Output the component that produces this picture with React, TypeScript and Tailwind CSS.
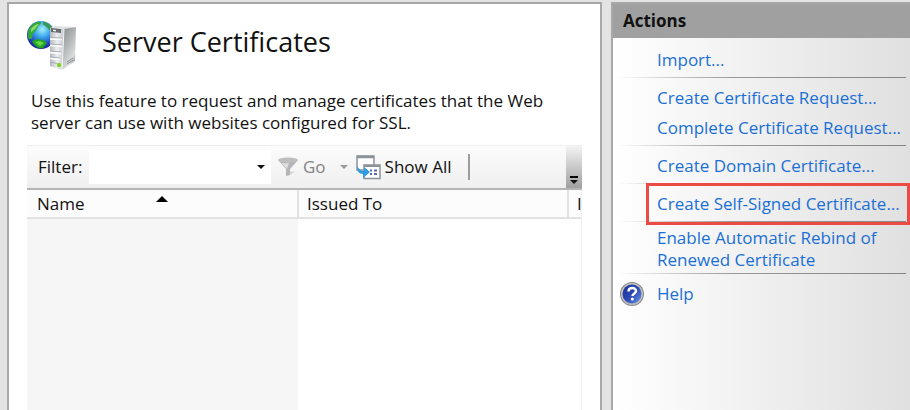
import { useState } from 'react';
import clsx from 'clsx';

interface Action {
  label: string;
  icon?: boolean;
  highlighted?: boolean;
  multiline?: boolean;
}

const ACTION_GROUPS: Action[][] = [
  [{ label: 'Import...' }],
  [{ label: 'Create Certificate Request...' }, { label: 'Complete Certificate Request...' }],
  [{ label: 'Create Domain Certificate...' }],
  [{ label: 'Create Self-Signed Certificate...', highlighted: true }],
  [{ label: 'Enable Automatic Rebind of Renewed Certificate', multiline: true }],
  [{ label: 'Help', icon: true }],
];

function ServerIcon() {
  return (
    <svg width="50" height="52" viewBox="0 0 50 52" aria-hidden="true" className="shrink-0">
      <defs>
        <radialGradient id="ocean" cx="0.55" cy="0.3" r="0.7">
          <stop offset="0" stopColor="#a5f0ff" />
          <stop offset="0.4" stopColor="#3aa5ea" />
          <stop offset="0.75" stopColor="#2448c4" />
          <stop offset="1" stopColor="#1a2590" />
        </radialGradient>
        <linearGradient id="side" x1="0" y1="0" x2="0.6" y2="1">
          <stop offset="0" stopColor="#858a8a" />
          <stop offset="0.55" stopColor="#b9bdbd" />
          <stop offset="0.85" stopColor="#dcdede" />
          <stop offset="1" stopColor="#9a9e9e" />
        </linearGradient>
        <linearGradient id="front" x1="0" y1="0" x2="1" y2="0">
          <stop offset="0" stopColor="#b4b8bd" />
          <stop offset="0.5" stopColor="#eceef0" />
          <stop offset="1" stopColor="#c4c7ca" />
        </linearGradient>
      </defs>
      <circle cx="14" cy="15" r="14" fill="url(#ocean)" />
      <path d="M1.500 10C3.500 5 8 1.500 13 1.500l1 2-3 3-2 4-3 3-1 5-3 1C.5 16 .5 13 1.500 10Z" fill="#35a83c" />
      <path d="M4 9c2-3 5-5 8-5l-4 5-4 3Z" fill="#8fdc6a" />
      <path d="M16 1.500c5 1 9 4 11 8l-4 1-4-4-3-2Z" fill="#3a9a55" />
      <path d="M5 21l5-2 6 1 4 3-4 5c-4 1-8-1-11-7Z" fill="#22a524" />
      <path d="M8 22l5-1 4 2-4 3Z" fill="#67d545" />
      <path d="M23 8l5-2 21 1-12 2Z" fill="#dfe1e2" />
      <path d="M23 8l14 1-2 41-12-4Z" fill="url(#front)" />
      <path d="M37 9l12-2-1 34-13 9Z" fill="url(#side)" />
      <path d="M37 9l-2 41" stroke="#f4f5f5" strokeWidth="1" />
      <path d="M24 8l10 1v4l-10-1Z" fill="#666b70" />
      <path d="M26 9.500l3 .4v1.500l-3-.3Z" fill="#f4f4f4" />
      <path d="M23 17.500l12 .5M23 24l12 1M23 31l11 1M23 37l10 1M23 42l7 1.500" stroke="#a9aeb4" strokeWidth="1" />
      <path d="M23 19l12 .5M23 25.500l12 1M23 32.500l11 1M23 38.500l10 1" stroke="#fff" strokeWidth="1.500" />
      <path d="M40 42l6-4M40 44l6-4" stroke="#8a8f8f" strokeWidth="1" />
      <rect x="30" y="43" width="4" height="4" rx="1.500" fill="#7ed321" />
    </svg>
  );
}

function FunnelIcon() {
  return (
    <svg width="22" height="20" viewBox="0 0 22 20" aria-hidden="true">
      <ellipse cx="11" cy="3" rx="10" ry="2.500" fill="#bdbdbd" />
      <path d="M1 3c3 3 17 3 20 0l-8 9v6l-4 1v-7Z" fill="#b4b4b4" />
      <path d="M4 5.500c3 1 6 1 8 .8L10 12Z" fill="#dedede" />
      <path d="M13 18l5-3-5-1Z" fill="#d9d9d9" />
    </svg>
  );
}

function ShowAllIcon() {
  return (
    <svg width="25" height="25" viewBox="0 0 25 25" aria-hidden="true">
      <rect x="1" y="1" width="17" height="14" fill="#fff" stroke="#8c9299" strokeWidth="1.500" />
      <path d="M1 2h17" stroke="#8c9299" strokeWidth="2.500" />
      <rect x="8" y="10" width="16" height="13.500" fill="#fff" stroke="#8c9299" strokeWidth="1.500" />
      <path d="M8 11h16" stroke="#8c9299" strokeWidth="2" />
      <path d="M14 15.500h2M18 15.500h3M14 19h2M18 19h3" stroke="#5d6aa8" strokeWidth="2" />
      <path d="M1 11c0 5 2 8 6 8v4l7-6-6-5v4c-3 0-5-2-7-5Z" fill="#2d9be0" />
    </svg>
  );
}

function HelpIcon() {
  return (
    <svg width="24" height="24" viewBox="0 0 24 24" aria-hidden="true" className="shrink-0">
      <defs>
        <linearGradient id="helpBall" x1="0" y1="0" x2="1" y2="1">
          <stop offset="0" stopColor="#1d2f8f" />
          <stop offset="0.5" stopColor="#2a46b4" />
          <stop offset="1" stopColor="#6f9be8" />
        </linearGradient>
      </defs>
      <circle cx="12" cy="12" r="12" fill="#8a8a8a" />
      <circle cx="12" cy="12" r="11" fill="#c0c0c0" />
      <circle cx="12" cy="12" r="9.500" fill="url(#helpBall)" />
      <path d="M8.500 9.500c0-4.500 7.500-4.500 7.500-.5 0 2.500-3.500 2.500-3.500 5" fill="none" stroke="#fff" strokeWidth="2.500" />
      <circle cx="12.300" cy="17" r="1.500" fill="#fff" />
    </svg>
  );
}

function Caret({ className }: { className?: string }) {
  return (
    <svg width="8" height="4" viewBox="0 0 8 4" aria-hidden="true" className={className}>
      <path d="M0 0h8L4 4Z" fill="currentColor" />
    </svg>
  );
}

function Toolbar() {
  const [filter, setFilter] = useState('');

  return (
    <div className="flex h-[45px] items-stretch border-t border-b-2 border-t-[#f0f0f0] border-b-[#b4b6b4] bg-linear-to-b from-[#fcfcfc] to-[#efefef]">
      <label htmlFor="filter" className="w-[62px] shrink-0 self-center pl-[11px]">
        Filter:
      </label>
      <div className="relative my-1 w-[182px] shrink-0">
        <select
          id="filter"
          value={filter}
          onChange={(e) => setFilter(e.target.value)}
          className="h-full w-full appearance-none bg-white px-2 outline-none"
        >
          <option value=""></option>
        </select>
        <Caret className="pointer-events-none absolute right-1.5 top-1/2 -translate-y-1/2" />
      </div>
      <button type="button" disabled className="flex items-center gap-1 pl-1.5 text-[#848484]">
        <FunnelIcon />
        Go
        <Caret className="ml-2.5 text-[#9a9a9a]" />
      </button>
      <button type="button" className="flex items-center gap-1 pl-2">
        <ShowAllIcon />
        Show All
      </button>
      <div className="ml-4 h-[26px] w-0.5 self-center bg-[#9c9c9c]" />
      <button
        type="button"
        aria-label="More tools"
        className="ml-auto flex w-4 flex-col items-center justify-end gap-0.5 bg-linear-to-b from-[#f4f4f4] to-[#a0a0a0] pb-1"
      >
        <span className="h-0.5 w-2 bg-black" />
        <Caret />
      </button>
    </div>
  );
}

function CertificateTable() {
  return (
    <table className="h-full w-full table-fixed border-collapse text-left">
      <thead>
        <tr className="h-7 border-b-2 border-[#e2e2e2] bg-[#fcfcfc]">
          <th className="relative w-[271px] border-r-2 border-[#e2e2e2] pl-2.5 font-normal">
            Name
            <svg
              width="12"
              height="6"
              viewBox="0 0 12 6"
              aria-hidden="true"
              className="absolute left-1/2 top-1.5 -translate-x-1/2"
            >
              <path d="M6 0l6 6H0Z" fill="#000" />
            </svg>
          </th>
          <th className="w-[270px] border-r-2 border-[#e2e2e2] pl-2 font-normal">Issued To</th>
          <th className="pl-2 font-normal">I</th>
        </tr>
      </thead>
      <tbody>
        <tr>
          <td className="bg-[#f6f6f6]" />
          <td />
          <td />
        </tr>
      </tbody>
    </table>
  );
}

function ActionsPane() {
  return (
    <aside className="flex w-[299px] shrink-0 flex-col border-l-2 border-t-2 border-[#a8a8a8] bg-linear-to-r from-white to-[#e0e0e0]">
      <h2 className="bg-[#a0a0a0] pb-1.5 pl-2.5 pt-1.5 text-[17px] font-bold leading-[22px]">Actions</h2>
      <div className="pl-1 pr-1 pt-[7px]">
        {ACTION_GROUPS.map((group, i) => (
          <div key={i}>
            {i > 0 && (
              <div className="mb-[5px] mt-0.5 h-px bg-linear-to-r from-transparent via-[#999] via-40% to-[#858585]" />
            )}
            <ul>
              {group.map((action) => (
                <li key={action.label} className="relative flex items-center">
                  <span className="w-10 shrink-0 pl-[3px]">{action.icon && <HelpIcon />}</span>
                  <a
                    href="#"
                    className={clsx(
                      'text-[#1a6fd6] hover:underline',
                      action.multiline ? 'leading-[22px]' : 'whitespace-nowrap leading-[30px]',
                    )}
                  >
                    {action.label}
                  </a>
                  {action.highlighted && (
                    <div className="pointer-events-none absolute -bottom-1.5 -right-1 -top-1.5 left-[29px] border-3 border-[#ea4b45]" />
                  )}
                </li>
              ))}
            </ul>
          </div>
        ))}
      </div>
    </aside>
  );
}

export default function App() {
  return (
    <div className="flex min-h-screen gap-[9px] bg-[#e3e3e3] pl-[7px] pt-0.5 font-['Open_Sans','Noto_Sans',sans-serif] text-[17px] leading-[22px] text-[#111]">
      <main className="flex min-w-0 flex-1 flex-col border-x-2 border-t-2 border-[#a8a8a8] bg-white pl-[18px] pr-[18px]">
        <header className="flex items-center gap-[25px] pt-4">
          <ServerIcon />
          <h1 className="pb-2 text-[27px] leading-9">Server Certificates</h1>
        </header>
        <p className="pb-[11px] pl-1 pt-[18px]">
          Use this feature to request and manage certificates that the Web server can use with websites configured for
          SSL.
        </p>
        <Toolbar />
        <div className="flex-1 overflow-hidden border-r border-[#f0f0f0]">
          <CertificateTable />
        </div>
      </main>
      <ActionsPane />
    </div>
  );
}
